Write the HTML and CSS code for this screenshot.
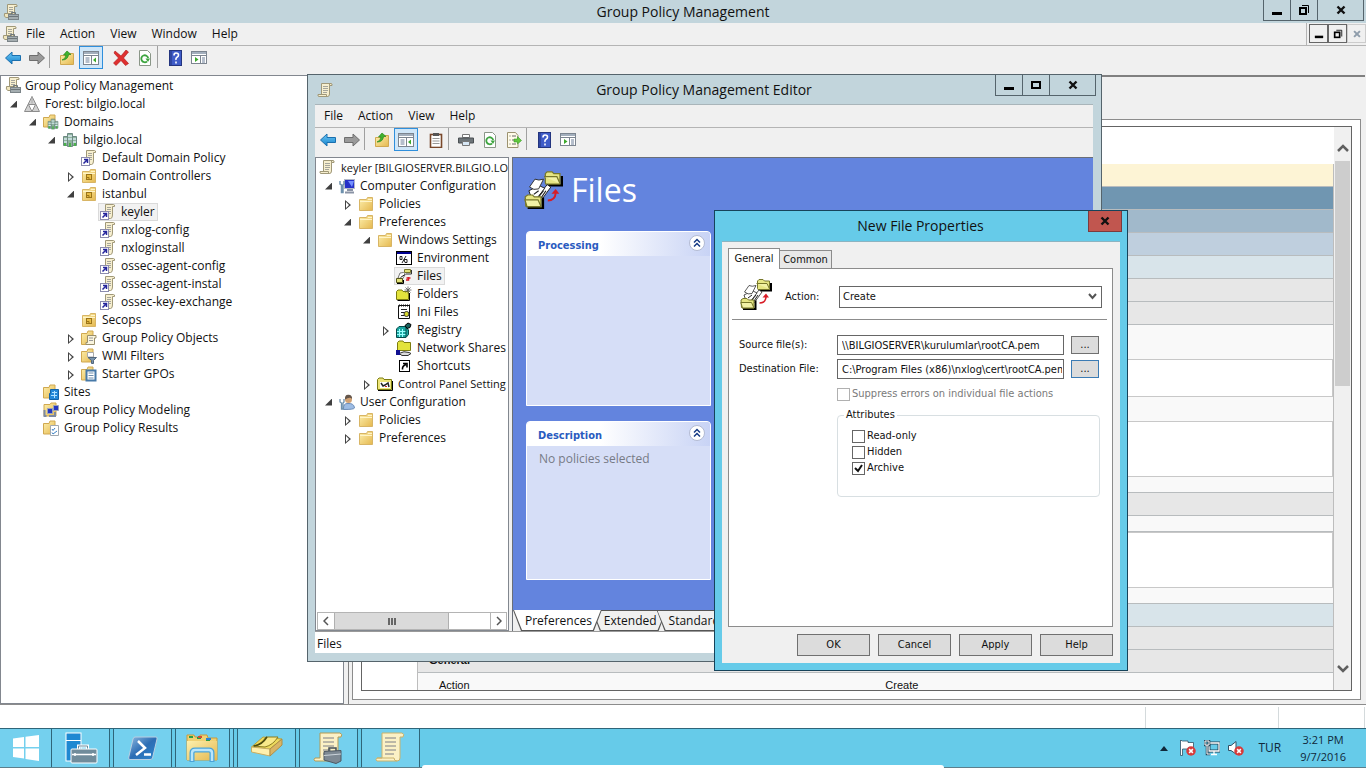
FILE: index.html
```
<!DOCTYPE html>
<html lang="en">
<head>
    <meta charset="utf-8">
    <title>Group Policy Management</title>
    <link rel="stylesheet" href="styles.css">
</head>
<body>
    <!-- icon set -->
    <svg class="defs" width="0" height="0" aria-hidden="true">
        <linearGradient id="gold" x1="0" y1="0" x2="1" y2="1"><stop offset="0" stop-color="#fdf0ae"/><stop offset="1" stop-color="#e5b84f"/></linearGradient>
        <linearGradient id="blue" x1="0" y1="0" x2="0" y2="1"><stop offset="0" stop-color="#6cc8f5"/><stop offset="1" stop-color="#1682cc"/></linearGradient>
        <linearGradient id="shell" x1="0" y1="0" x2="1" y2="1"><stop offset="0" stop-color="#8fb9e0"/><stop offset=".5" stop-color="#2c6db4"/><stop offset="1" stop-color="#2d88d0"/></linearGradient>
        <symbol id="scroll" viewBox="0 0 16 16">
            <path d="M4.500 1.500H14q1.500 0 1 2H12.500V12q0 2.500-2 2.500H2Q.5 14.500 1 12.500H4.500Z" fill="#f7efcf" stroke="#a09878"/>
            <path d="M1.500 12.500H9.500q-.5 2 1 2M12.500 3.500V2" fill="none" stroke="#a09878"/>
            <path d="M6 4.500h5M6 6.500h5M6 8.500h5M6 10.500h4" stroke="#a5a59c"/>
        </symbol>
        <symbol id="gpm" viewBox="0 0 16 16">
            <path d="M4.500.5H13q1.500 0 1 2H11.500V10.500H2.500V9.500H4.500Z" fill="#f7efcf" stroke="#a09878"/>
            <path d="M6 3.500h4M6 5.500h4M6 7.500h4" stroke="#a5a59c"/>
            <path d="M1.500 9.500H10V13.500H3Q.5 13 1.500 9.500Z" fill="#f1e6bd" stroke="#a09878"/>
            <rect x="5.500" y="10.500" width="10" height="5" fill="#a4adb0" stroke="#7b8488"/><path d="M8.500 10V8.500h4V10M6 12.500h9" fill="none" stroke="#6d767a"/>
        </symbol>
        <symbol id="link" viewBox="0 0 16 16">
            <path d="M5.500.5H13.500q1.500 0 1 2H12.500V11q0 3.500-2 3.500H4.500V10.500H5.500Z" fill="#f7efcf" stroke="#a09878"/>
            <path d="M7 3.500h4M7 5.500h4M7 7.500h4M9 9.500h2" stroke="#a5a59c"/>
            <rect x=".5" y="7.500" width="8" height="8" fill="#fff" stroke="#8c8cae"/><path d="M2.500 13.500 6 10M3 9.500H6.500V13" fill="none" stroke="#25259c" stroke-width="1.500"/>
        </symbol>
        <symbol id="folder" viewBox="0 0 16 16">
            <path d="M1.500 3.500H8.500L9.500 1.500H14.500V14.500H1.500Z" fill="url(#gold)" stroke="#d8b565"/><path d="M10 3.500h4M2 5.500h12" stroke="#fff4c8"/>
        </symbol>
        <symbol id="ou" viewBox="0 0 16 16">
            <use href="#folder"/><rect x="5.500" y="6.500" width="5" height="5" fill="#e8bd44" stroke="#9b7418"/><path d="M5 9.500h3v2" fill="none" stroke="#9b7418"/>
        </symbol>
        <symbol id="forest" viewBox="0 0 16 16">
            <path d="M8 .5 15.500 15.500H.5Z" fill="#d0d0d0" stroke="#8c8c8c"/><path d="M4.500 8.500h7L8 15.500Z" fill="#fff" stroke="#8c8c8c"/><path d="M8 .5v7" stroke="#aaa"/>
        </symbol>
        <symbol id="domain" viewBox="0 0 16 16">
            <path d="M5.500 1.500h5v13h-5ZM1.500 4.500h4v9h-4ZM10.500 4.500h4v9h-4Z" fill="#8fb39c" stroke="#6e8a84"/>
            <path d="M6 4h4M6 7h4M2 7h3M11 7h3M2 10h3M11 10h3" stroke="#d6e9ee" stroke-width="1.500"/><path d="M3 14v-3M8 15v-4M13 14v-3" stroke="#4cb04c" stroke-width="2"/>
        </symbol>
        <symbol id="domains" viewBox="0 0 16 16">
            <path d="M.5 3.500H6L7 1H12V13H.5Z" fill="url(#gold)" stroke="#d0a850"/><svg x="4" y="4" width="12" height="12"><use href="#domain"/></svg>
        </symbol>
        <symbol id="gpos" viewBox="0 0 16 16">
            <path d="M.5 3.500H6L7 1H12V14.500H.5Z" fill="url(#gold)" stroke="#d0a850"/><path d="M6.500 5.500H15V8H13.500V14.500H5V12.500H6.500Z" fill="#f9f4de" stroke="#998f6c"/><path d="M8 8h4M8 10.500h4" stroke="#999"/>
        </symbol>
        <symbol id="wmi" viewBox="0 0 16 16">
            <path d="M.5 3.500H6L7 1H12V14H.5Z" fill="url(#gold)" stroke="#d0a850"/><path d="M6.500 4.500H12.500V9H6.500Z" fill="#fff" stroke="#aaa"/><path d="M7 9.500h8.500L12.500 12.500V15.500H10.500V12.500Z" fill="#7893ad" stroke="#52677d"/>
        </symbol>
        <symbol id="starter" viewBox="0 0 16 16">
            <path d="M.5 3.500H6L7 1H12V14H.5Z" fill="url(#gold)" stroke="#d0a850"/><path d="M5.500 4.500H14.500V14.500H5.500Z" fill="#fff" stroke="#4779a8" stroke-width="2"/><path d="M7.500 7h5M7.500 9.500h5M7.500 12h5" stroke="#6f8eac"/>
        </symbol>
        <symbol id="sites" viewBox="0 0 16 16">
            <path d="M.5 3.500H6L7 1H12V14H.5Z" fill="url(#gold)" stroke="#d0a850"/><path d="M7.500 5.500H15.500V15.500H6.500V9.500H7.500Z" fill="#2488d8" stroke="#1463a8"/><path d="M9 8.500h5M8 11.500h6M11.500 7v7" stroke="#b2e2ff"/>
        </symbol>
        <symbol id="modeling" viewBox="0 0 16 16">
            <path d="M1 2.500H7L8 1H13V14H1Z" fill="url(#gold)" stroke="#d0a850"/><path d="M4.500 6.500h5v5h-5ZM10.500 3.500h5v5h-5Z" fill="#2536c0" stroke="#9aa3b8"/><path d="M1.500 8v6h2M12 10v4H6" fill="none" stroke="#7d8aa2" stroke-width="2"/>
        </symbol>
        <symbol id="results" viewBox="0 0 16 16">
            <path d="M.5 3.500H6L7 1H12V14H.5Z" fill="url(#gold)" stroke="#d0a850"/><path d="M7.500 5.500h8v10h-8Z" fill="#fff" stroke="#a0a8b0"/><path d="M9 9l1 1.500L12 8M9 12.500l1 1.500L14 11" fill="none" stroke="#3a80c4"/>
        </symbol>
        <symbol id="computer" viewBox="0 0 16 16">
            <rect x="5.500" y="1.500" width="10" height="9" fill="#2430c8" stroke="#b3b9ca"/><path d="M9 3h6L13 9Z" fill="#7490ff"/><path d="M8 12h6M6 14.500h9" stroke="#8a93a5" stroke-width="2"/><path d="M1 3v3l1.500 1V14.500H4V7L5 6V3" fill="none" stroke="#6d90ad" stroke-width="1.500"/>
        </symbol>
        <symbol id="user" viewBox="0 0 16 16">
            <path d="M4.500 15.500Q4 9 9 9.500q6-.5 6.500 4.500Q15 15.500 4.500 15.500Z" fill="#9dbce4" stroke="#6d8db8"/><circle cx="9.500" cy="5.500" r="3.500" fill="#d2a274"/><path d="M6 5.500Q5.500.5 9.500.8 13.500 1 13 5 11 2.500 6 5.500Z" fill="#65564b"/><path d="M1 5v3l1.500 1V15H4V9L5 8V5" fill="none" stroke="#6d90ad" stroke-width="1.300"/>
        </symbol>
        <symbol id="env" viewBox="0 0 16 16">
            <rect x=".5" y="1.500" width="15" height="13" fill="#fff" stroke="#000"/><path d="M1 3h14" stroke="#000090" stroke-width="2"/><path d="M10 6 6 13M4 6.500h2v3H4ZM8 9.500h3v3H9Z" fill="none" stroke="#222"/>
        </symbol>
        <symbol id="files" viewBox="0 0 32 32">
            <path d="M31 5V12.500H20" fill="none" stroke="#000" stroke-width="2"/>
            <path d="M17.500 10.500V3L19 1.500h4L24.500 3H29.500V11.500H18Z" fill="#e6e684" stroke="#77772a"/><path d="M16.500 5.500H27L29.500 11" fill="#f2f2a6" stroke="#77772a"/>
            <path d="M8 22 13 16 15 17 19 12 22 14 14 25Z" fill="#fff" stroke="#222" stroke-width=".8"/>
            <path d="M5 20 4 17 10 14 13 13 17 15 10 24Z" fill="#fff" stroke="#222" stroke-width=".8"/>
            <path d="M4.500 14 9 7.500Q12 9 16 7.500L12 15.500Q8 17 4.500 14Z" fill="#fff" stroke="#333" stroke-width=".8"/>
            <path d="M8 20l4-3M12 22l4-5M14 23l4-6" stroke="#222"/>
            <path d="M15.500 22.500V31H3" fill="none" stroke="#000" stroke-width="2"/>
            <path d="M1.500 29.500 1 22 3 20.500h4L8.500 22H14V30H2Z" fill="#e6e684" stroke="#77772a"/><path d="M.8 24.500H11.500L14 30H2.500Z" fill="#f2f2a6" stroke="#77772a"/>
            <path d="M19.500 25q6 0 6.500-6" fill="none" stroke="#d81c26" stroke-width="1.600"/><path d="M22.500 19.500 26 15.500 29 19.500Z" fill="#d81c26"/>
        </symbol>
        <symbol id="files-small" viewBox="0 0 16 16">
            <path d="M8.500 4.500V1.500H14.500V4.500Z" fill="#e3e37a" stroke="#77772a"/><path d="M15.500 2v4H10" fill="none" stroke="#333"/>
            <path d="M2 10 4 5 7.500 4.500 9.500 6 6.500 11Z" fill="#fff" stroke="#555" stroke-width=".8"/><path d="M4.500 9.500 9 6.500" stroke="#222"/>
            <path d="M.5 14.500V10.500H6.500V14.500Z" fill="#e3e37a" stroke="#55551a"/><path d="M1 15.500H7.500V12" fill="none" stroke="#000"/>
            <path d="M10 12h2.500V9M10.500 10h4" fill="none" stroke="#d81c26" stroke-width="1.500"/>
        </symbol>
        <symbol id="folders" viewBox="0 0 16 16">
            <path d="M.5 13.500V5.500L2 4H6l1 1.500h5.500v8Z" fill="#e3e33c" stroke="#7c7c10"/><path d="M1.500 14.500h12V7" fill="none" stroke="#000"/><path d="M12 .5v7M8.500 4h7M9.500 1.500l5 5M14.500 1.500l-5 5" stroke="#555" stroke-width=".8"/>
        </symbol>
        <symbol id="ini" viewBox="0 0 16 16">
            <path d="M2.500 1.500h11v13h-11Z" fill="#fff" stroke="#111"/><path d="M3 1.500h11" stroke="#111" stroke-width="2" stroke-dasharray="1 1"/><path d="M5 5.500h6M5 8.500h4M5 11.500h3" stroke="#222"/><circle cx="10.500" cy="10" r="2.500" fill="#d8d830" stroke="#333"/>
        </symbol>
        <symbol id="registry" viewBox="0 0 16 16">
            <path d="M.5 7 3 4.500H9.500L12.500 8V12.500L10 15.500H.5Z" fill="#1ba7a2" stroke="#064a4a"/><path d="M3.500 7v8M6.500 7v8M1 9.500h9M1 12.500h9" stroke="#9ff"/><path d="M10 5v10" stroke="#064a4a"/><path d="M9 3.500 12 1l3 1.500-1 3-3 1Z" fill="#18615e" stroke="#000"/>
        </symbol>
        <symbol id="shares" viewBox="0 0 16 16">
            <path d="M1.500 10.500V2.500L3 1H7L8 2.500h6.500v8Z" fill="#e3e33c" stroke="#7c7c10"/><path d="M3 13.500q5-3 10-1l2 1-3 2H6Z" fill="#ddd" stroke="#333"/><rect x="0" y="10" width="4" height="5" fill="#101090"/>
        </symbol>
        <symbol id="shortcut" viewBox="0 0 16 16">
            <rect x="3.500" y="2.500" width="10" height="11" fill="#fff" stroke="#000"/><path d="M6.500 11.500Q6 8 10 6.500M7 5.500h4v4" fill="none" stroke="#000" stroke-width="1.600"/>
        </symbol>
        <symbol id="control" viewBox="0 0 16 16">
            <path d="M.5 13.500V3.500L2 2H6l1 1.500h7.500v10Z" fill="#efe67a" stroke="#7c7c10"/><path d="M1 14.500h14.500V5" fill="none" stroke="#000"/><rect x="3" y="6" width="10" height="6" fill="#fff"/><path d="M4 7l2 3 2-1 3-2 1 4" fill="none" stroke="#222" stroke-width="1.500"/><path d="M8 10.500h2" stroke="#c22"/>
        </symbol>
        <symbol id="back" viewBox="0 0 16 16"><path d="M.5 8 7 2V5.500h8.500v5H7V14Z" fill="url(#blue)" stroke="#1a6fae"/></symbol>
        <symbol id="forward" viewBox="0 0 16 16"><path d="M15.500 8 9 2V5.500H.5v5H9V14Z" fill="#9a9a9a" stroke="#6e6e6e"/></symbol>
        <symbol id="up" viewBox="0 0 16 16"><path d="M1.500 5.500H9.500L10.500 3.500H14.500V14.500H1.500Z" fill="url(#gold)" stroke="#d0a850"/><path d="M3 10Q6.500 9 7 5H4.500L8 1 12 4.500H9.500Q9 10 3 10Z" fill="#3fb22e" stroke="#288a1c" stroke-width=".7"/></symbol>
        <symbol id="pane" viewBox="0 0 16 16">
            <rect x=".5" y="1.500" width="15" height="13" fill="#fff" stroke="#7c8590"/><path d="M1 3h14" stroke="#a3afbd" stroke-width="2"/><path d="M1 5.500h14M8.500 6v9" stroke="#7c8590"/><path d="M2.500 8h4M2.500 10h4M2.500 12h4" stroke="#6c7f99"/><path d="M13 7.500v5L10 10Z" fill="#3aa82a"/>
        </symbol>
        <symbol id="paneright" viewBox="0 0 16 16">
            <rect x=".5" y="1.500" width="15" height="12" fill="#fff" stroke="#7c8590"/><path d="M1 3h14" stroke="#a3afbd" stroke-width="2"/><path d="M1 5.500h14M9.500 6v8" stroke="#7c8590"/><path d="M11 8h3M11 10h3M11 12h3" stroke="#6c7f99"/><path d="M4 7v5L7.500 9.500Z" fill="#3aa82a"/>
        </symbol>
        <symbol id="delete" viewBox="0 0 16 16"><path d="M2 1 8 6 13 0l2.500 2L10.500 8l5 5.500L12.500 15.500 8 10.500 3 15.500.5 13 5.500 8 1 3Z" fill="#df3030" stroke="#ad1414" stroke-width=".6"/></symbol>
        <symbol id="refresh" viewBox="0 0 16 16"><path d="M2.500.5h8L13.500 3.500V15.500H2.500Z" fill="#fff" stroke="#8a9688"/><path d="M10 11.500A3.500 3.500 0 1 1 11.200 8" fill="none" stroke="#3da53f" stroke-width="1.800"/><path d="M8.500 8.500H13L11 12Z" fill="#3da53f"/></symbol>
        <symbol id="help" viewBox="0 0 16 16"><rect x="2.500" y=".5" width="12" height="15" fill="#3f5cc8" stroke="#24357f"/><path d="M4 1v14" stroke="#23337c"/><path d="M7 5.500Q7 3 9 3q2.500 0 2.500 2 0 1.500-1.500 2.300T9 10M9 11.500v2" fill="none" stroke="#fff" stroke-width="1.600"/></symbol>
        <symbol id="clip" viewBox="0 0 16 16"><rect x="2.500" y="2.500" width="11" height="13" fill="#fff" stroke="#79482b" stroke-width="1.600"/><path d="M5 2.500h6" stroke="#555" stroke-width="3"/><path d="M4.500 6.500h7M4.500 9h7M4.500 11.500h7" stroke="#999"/></symbol>
        <symbol id="print" viewBox="0 0 16 16"><path d="M4.500 2.500h7v3h-7Z" fill="#fff" stroke="#777"/><path d="M.5 6h15v5H.5Z" fill="#6d7478" stroke="#4c5154"/><path d="M4.500 9.500h7v4h-7Z" fill="#d7e7f5" stroke="#777"/></symbol>
        <symbol id="export" viewBox="0 0 16 16"><path d="M1.500.5h8L12 3.500V15.500H1.500Z" fill="#fffbe9" stroke="#9c9270"/><path d="M3.500 4h1M6 4h4M3.500 8h1M6 8h3M3.500 12h1M6 12h4" stroke="#666"/><path d="M8 7h3.500V4.500L15.500 8.500 11.500 12V10H8Z" fill="#63c83f" stroke="#379a25" stroke-width=".6"/></symbol>
        <symbol id="chevrons" viewBox="0 0 16 16"><circle cx="8" cy="8" r="7.500" fill="#fff" stroke="#b2bad2"/><path d="M5 7.500l3-3 3 3M5 11.500l3-3 3 3" fill="none" stroke="#173b86" stroke-width="1.500"/></symbol>
        <symbol id="error" viewBox="0 0 8 8"><circle cx="4" cy="4" r="3.800" fill="#d63b3b"/><path d="M2.500 2.500l3 3M5.500 2.500l-3 3" stroke="#fff" stroke-width="1.200"/></symbol>
        <symbol id="min" viewBox="0 0 12 12"><path d="M1 9.500h10" stroke="#000" stroke-width="3"/></symbol>
        <symbol id="max" viewBox="0 0 12 12"><rect x="2" y="3" width="8" height="6" fill="none" stroke="#000" stroke-width="2"/></symbol>
        <symbol id="restore" viewBox="0 0 12 12"><rect x="2" y="4" width="6" height="6" fill="none" stroke="#000" stroke-width="2"/><path d="M4 1.500h6.500V9" fill="none" stroke="#000"/></symbol>
        <symbol id="close" viewBox="0 0 12 12"><path d="M2.500 2.500l7 7M9.500 2.500l-7 7" stroke="currentColor" stroke-width="2.400"/></symbol>
    </svg>

    <header class="titlebar">
        <svg class="icon"><use href="#gpm"/></svg>
        <h1>Group Policy Management</h1>
        <div class="caption">
            <button aria-label="Minimize"><svg><use href="#min"/></svg></button><button aria-label="Restore"><svg><use href="#restore"/></svg></button><button class="wide" aria-label="Close"><svg><use href="#close"/></svg></button>
        </div>
    </header>

    <nav class="menubar main-menu">
        <svg class="icon"><use href="#gpm"/></svg>
        <button>File</button><button>Action</button><button>View</button><button>Window</button><button>Help</button>
        <div class="mdi">
            <button aria-label="Minimize child"><svg><use href="#min"/></svg></button><button aria-label="Restore child"><svg><use href="#restore"/></svg></button><button class="off" aria-label="Close child" disabled><svg><use href="#close"/></svg></button>
        </div>
    </nav>

    <div class="toolbar">
        <button aria-label="Back"><svg class="icon"><use href="#back"/></svg></button>
        <button aria-label="Forward"><svg class="icon"><use href="#forward"/></svg></button>
        <span class="sep"></span>
        <button aria-label="Up"><svg class="icon"><use href="#up"/></svg></button>
        <button class="on" aria-label="Show tree"><svg class="icon"><use href="#pane"/></svg></button>
        <span class="space"></span>
        <button aria-label="Delete"><svg class="icon"><use href="#delete"/></svg></button>
        <button aria-label="Refresh"><svg class="icon"><use href="#refresh"/></svg></button>
        <span class="sep"></span>
        <button aria-label="Help topics"><svg class="icon"><use href="#help"/></svg></button>
        <button aria-label="Show actions"><svg class="icon"><use href="#paneright"/></svg></button>
    </div>

    <main class="workspace">
        <div class="tree console-tree">
            <div class="root"><svg class="icon"><use href="#gpm"/></svg>Group Policy Management</div>
            <ul>
                <li><div class="row open"><span class="item"><svg class="icon"><use href="#forest"/></svg>Forest: bilgio.local</span></div>
                    <ul>
                        <li><div class="row open"><span class="item"><svg class="icon"><use href="#domains"/></svg>Domains</span></div>
                            <ul>
                                <li><div class="row open"><span class="item"><svg class="icon"><use href="#domain"/></svg>bilgio.local</span></div>
                                    <ul>
                                        <li><div class="row"><span class="item"><svg class="icon"><use href="#link"/></svg>Default Domain Policy</span></div></li>
                                        <li><div class="row shut"><span class="item"><svg class="icon"><use href="#ou"/></svg>Domain Controllers</span></div></li>
                                        <li><div class="row open"><span class="item"><svg class="icon"><use href="#ou"/></svg>istanbul</span></div>
                                            <ul>
                                                <li><div class="row"><span class="item selected"><svg class="icon"><use href="#link"/></svg>keyler</span></div></li>
                                                <li><div class="row"><span class="item"><svg class="icon"><use href="#link"/></svg>nxlog-config</span></div></li>
                                                <li><div class="row"><span class="item"><svg class="icon"><use href="#link"/></svg>nxloginstall</span></div></li>
                                                <li><div class="row"><span class="item"><svg class="icon"><use href="#link"/></svg>ossec-agent-config</span></div></li>
                                                <li><div class="row"><span class="item"><svg class="icon"><use href="#link"/></svg>ossec-agent-instal</span></div></li>
                                                <li><div class="row"><span class="item"><svg class="icon"><use href="#link"/></svg>ossec-key-exchange</span></div></li>
                                            </ul>
                                        </li>
                                        <li><div class="row"><span class="item"><svg class="icon"><use href="#ou"/></svg>Secops</span></div></li>
                                        <li><div class="row shut"><span class="item"><svg class="icon"><use href="#gpos"/></svg>Group Policy Objects</span></div></li>
                                        <li><div class="row shut"><span class="item"><svg class="icon"><use href="#wmi"/></svg>WMI Filters</span></div></li>
                                        <li><div class="row shut"><span class="item"><svg class="icon"><use href="#starter"/></svg>Starter GPOs</span></div></li>
                                    </ul>
                                </li>
                            </ul>
                        </li>
                        <li><div class="row"><span class="item"><svg class="icon"><use href="#sites"/></svg>Sites</span></div></li>
                        <li><div class="row"><span class="item"><svg class="icon"><use href="#modeling"/></svg>Group Policy Modeling</span></div></li>
                        <li><div class="row"><span class="item"><svg class="icon"><use href="#results"/></svg>Group Policy Results</span></div></li>
                    </ul>
                </li>
            </ul>
        </div>

        <section class="details">
            <div class="tabpage">
                <div class="report">
                    <div class="report-body">
                        <div class="band note"></div>
                        <div class="band level0"></div>
                        <div class="band level1"></div>
                        <div class="band level2"></div>
                        <div class="band level3"></div>
                        <div class="band level4"></div>
                        <div class="band level4"></div>
                        <div class="box first"></div>
                        <div class="gap"></div>
                        <div class="box"></div>
                        <div class="gap short"></div>
                        <div class="band level4"></div>
                        <div class="gap short"></div>
                        <div class="box"></div>
                        <div class="gap short"></div>
                        <div class="band level3"></div>
                        <div class="band level4"></div>
                        <div class="band level4">General</div>
                        <table class="values">
                            <tr><td>Action</td><td>Create</td></tr>
                        </table>
                    </div>
                    <div class="vscroll">
                        <svg viewBox="0 0 12 8"><path d="M1 7 6 2l5 5" fill="none" stroke="#5f5f5f" stroke-width="2.500"/></svg>
                        <div class="thumb"></div>
                        <svg class="down" viewBox="0 0 12 8"><path d="M1 1l5 5 5-5" fill="none" stroke="#5f5f5f" stroke-width="2.500"/></svg>
                    </div>
                </div>
            </div>
        </section>
    </main>

    <footer class="statusbar"><span></span><span></span></footer>

    <nav class="taskbar">
        <button class="start" aria-label="Start"><svg width="28" height="28" viewBox="0 0 28 28"><path d="M1 4.500 12 3V13H1ZM13.500 2.800 27 1V13H13.500ZM1 14.500H12V24.500L1 23ZM13.500 14.500H27V27L13.500 25Z" fill="#fff"/></svg></button>
        <button class="task" aria-label="Server Manager"><svg width="34" height="34" viewBox="0 0 34 34"><rect x="2" y="2" width="15" height="28" fill="#1e88d2" stroke="#fff"/><path d="M2 9.500h15" stroke="#fff"/><path d="M14.500 18v-3h9v3" fill="none" stroke="#fff" stroke-width="3"/><path d="M14.500 18v-3h9v3" fill="none" stroke="#6d8b9c"/><rect x="7" y="18" width="26" height="14" rx="1" fill="#708c9b" stroke="#fff"/><path d="M8 23.500H32M11 22v3M29 22v3" stroke="#fff" stroke-width="1.500"/></svg></button>
        <button class="task" aria-label="PowerShell"><svg width="30" height="26" viewBox="0 0 30 26"><path d="M7 2H28Q29.500 2 29 4L24.500 23Q24 24.500 22 24.500H2Q0 24.500.8 22L5 4Q5.500 2 7 2Z" fill="url(#shell)" stroke="#b9cfe2"/><path d="M10 6l7 7-9 7M16 19.500h7" fill="none" stroke="#fff" stroke-width="2.500"/></svg></button>
        <button class="task stack" aria-label="File Explorer"><svg width="34" height="32" viewBox="0 0 34 32"><path d="M2 6V3h7l1 2h5V3h7l1 3h9V28H2Z" fill="#f0d173" stroke="#c79b3d"/><path d="M4 5h4M12 6h4M21 8h4" stroke="#2a9d48" stroke-width="2"/><path d="M13 5h4" stroke="#d34a36" stroke-width="2"/><path d="M21 7h5" stroke="#2a82d4" stroke-width="2"/><path d="M2 9H32V28H2Z" fill="url(#gold)"/><path d="M7 30V21q0-3 3-3H24q3 0 3 3v9" fill="none" stroke="#4aa3da" stroke-width="5"/><path d="M7 29V21q0-3 3-3H24q3 0 3 3v8" fill="none" stroke="#b9e6fb" stroke-width="2.500"/></svg></button>
        <button class="task high" aria-label="Active Directory"><svg width="32" height="22" viewBox="0 0 32 22"><path d="M.5 12 12 2 31 4 19 14Z" fill="#ecd95d" stroke="#b5a241"/><path d="M2 11Q10 10 15 2L27 2Q22 10 14 12Z" fill="#f8e98a" stroke="#8b7c1c"/><path d="M3 11Q11 10 16 2" fill="none" stroke="#4a4a10" stroke-width="1.500"/><path d="M.5 12 19 14v7L.5 17Z" fill="#fff0ad" stroke="#c9ae62"/><path d="M19 14 31 4v6L19 21Z" fill="#d9b565" stroke="#b08e45"/></svg></button>
        <button class="task" aria-label="Group Policy Management"><svg width="32" height="32" viewBox="0 0 32 32"><path d="M7 1H27q3 1 1 4H25V26q0 3-3 3H2q-2-1 0-3H7Z" fill="#fbf1c6" stroke="#b59b53"/><path d="M10 6h11M10 10h11M10 14h11M10 18h8M10 22h4" stroke="#7d7f87"/><path d="M16 19v-3h7v3" fill="none" stroke="#434d57" stroke-width="1.500"/><path d="M11 19.500 28 18.500V29L23 31.500 11 28Z" fill="#7d8993" stroke="#4c5864"/><path d="M11 23.500 28 22" stroke="#cbd4db"/></svg></button>
        <button class="task" aria-label="Group Policy Editor"><svg width="32" height="32" viewBox="0 0 32 32"><path d="M7 1H27q3 1 1 4H25V26q0 3-3 3H2q-2-1 0-3H7Z" fill="#fbf1c6" stroke="#c9b26c"/><path d="M2 26H19q0 3 3 3" fill="none" stroke="#c9b26c"/><path d="M10 6h11M10 10h11M10 14h11M10 18h11M10 22h9" stroke="#7d7f87"/></svg></button>
        <div class="tray">
            <svg class="more" width="8" height="5" viewBox="0 0 8 5"><path d="M0 5 4 0l4 5Z" fill="#10283a"/></svg>
            <svg class="icon" viewBox="0 0 16 16"><path d="M.5 0v15.500h2V9h6V7.500h5V2.500H8V1H2.500Z" fill="#fff" stroke="#315064" stroke-width=".8"/><svg x="6" y="6" width="10" height="10"><use href="#error"/></svg></svg>
            <svg class="icon" viewBox="0 0 16 16"><rect x="5" y="3" width="10" height="8" fill="#66cbe9" stroke="#264558" stroke-width="3"/><path d="M5 3h10v8H5ZM7 14.500h6M10 11v3" fill="none" stroke="#fff" stroke-width="1.300"/><path d="M1 1h4v4H1ZM3 5v9h3" fill="none" stroke="#264558" stroke-width="2.500"/><path d="M1 1h4v4H1ZM3 5v9h3" fill="none" stroke="#fff"/></svg>
            <svg class="icon" viewBox="0 0 16 16"><path d="M.5 5.500H3L8 1.500V14L3 10.500H.5Z" fill="#fff" stroke="#315064"/><svg x="6" y="6" width="10" height="10"><use href="#error"/></svg></svg>
            <span class="lang">TUR</span>
            <time>3:21 PM<br>9/7/2016</time>
        </div>
        <span class="peek"></span>
    </nav>

    <!-- policy editor -->
    <section class="window editor">
        <header class="window-title">
            <svg class="icon"><use href="#scroll"/></svg>
            <h2>Group Policy Management Editor</h2>
            <div class="caption">
                <button aria-label="Minimize editor"><svg><use href="#min"/></svg></button><button aria-label="Maximize editor"><svg><use href="#max"/></svg></button><button class="wide" aria-label="Close editor"><svg><use href="#close"/></svg></button>
            </div>
        </header>
        <div class="window-body">
            <nav class="menubar"><button>File</button><button>Action</button><button>View</button><button>Help</button></nav>
            <div class="toolbar">
                <button aria-label="Back"><svg class="icon"><use href="#back"/></svg></button>
                <button aria-label="Forward"><svg class="icon"><use href="#forward"/></svg></button>
                <span class="sep"></span>
                <button aria-label="Up"><svg class="icon"><use href="#up"/></svg></button>
                <button class="on" aria-label="Show tree"><svg class="icon"><use href="#pane"/></svg></button>
                <span class="space"></span>
                <button aria-label="Paste"><svg class="icon"><use href="#clip"/></svg></button>
                <span class="sep"></span>
                <button aria-label="Print"><svg class="icon"><use href="#print"/></svg></button>
                <button aria-label="Refresh"><svg class="icon"><use href="#refresh"/></svg></button>
                <button aria-label="Export list"><svg class="icon"><use href="#export"/></svg></button>
                <span class="sep"></span>
                <button aria-label="Help topics"><svg class="icon"><use href="#help"/></svg></button>
                <button aria-label="Show actions"><svg class="icon"><use href="#paneright"/></svg></button>
            </div>
            <div class="panes">
                <div class="tree policy-tree">
                    <div class="root long"><svg class="icon"><use href="#scroll"/></svg>keyler [BILGIOSERVER.BILGIO.LO</div>
                    <ul>
                        <li><div class="row open"><span class="item"><svg class="icon"><use href="#computer"/></svg>Computer Configuration</span></div>
                            <ul>
                                <li><div class="row shut"><span class="item"><svg class="icon"><use href="#folder"/></svg>Policies</span></div></li>
                                <li><div class="row open"><span class="item"><svg class="icon"><use href="#folder"/></svg>Preferences</span></div>
                                    <ul>
                                        <li><div class="row open"><span class="item"><svg class="icon"><use href="#folder"/></svg>Windows Settings</span></div>
                                            <ul>
                                                <li><div class="row"><span class="item"><svg class="icon"><use href="#env"/></svg>Environment</span></div></li>
                                                <li><div class="row"><span class="item selected"><svg class="icon"><use href="#files-small"/></svg>Files</span></div></li>
                                                <li><div class="row"><span class="item"><svg class="icon"><use href="#folders"/></svg>Folders</span></div></li>
                                                <li><div class="row"><span class="item"><svg class="icon"><use href="#ini"/></svg>Ini Files</span></div></li>
                                                <li><div class="row shut"><span class="item"><svg class="icon"><use href="#registry"/></svg>Registry</span></div></li>
                                                <li><div class="row"><span class="item"><svg class="icon"><use href="#shares"/></svg>Network Shares</span></div></li>
                                                <li><div class="row"><span class="item"><svg class="icon"><use href="#shortcut"/></svg>Shortcuts</span></div></li>
                                            </ul>
                                        </li>
                                        <li><div class="row shut long"><span class="item"><svg class="icon"><use href="#control"/></svg>Control Panel Setting</span></div></li>
                                    </ul>
                                </li>
                            </ul>
                        </li>
                        <li><div class="row open"><span class="item"><svg class="icon"><use href="#user"/></svg>User Configuration</span></div>
                            <ul>
                                <li><div class="row shut"><span class="item"><svg class="icon"><use href="#folder"/></svg>Policies</span></div></li>
                                <li><div class="row shut"><span class="item"><svg class="icon"><use href="#folder"/></svg>Preferences</span></div></li>
                            </ul>
                        </li>
                    </ul>
                    <div class="hscroll">
                        <button aria-label="Scroll left"><svg width="6" height="10" viewBox="0 0 6 10"><path d="M5 1 1 5l4 4" fill="none" stroke="#555" stroke-width="1.500"/></svg></button>
                        <div class="thumb"><i></i><i></i><i></i></div>
                        <button aria-label="Scroll right"><svg width="6" height="10" viewBox="0 0 6 10"><path d="M1 1l4 4-4 4" fill="none" stroke="#555" stroke-width="1.500"/></svg></button>
                    </div>
                </div>
                <div class="extension">
                    <div class="canvas">
                        <div class="heading"><svg><use href="#files"/></svg><span>Files</span></div>
                        <div class="card processing">
                            <header><h3>Processing</h3><button aria-label="Collapse processing"><svg class="icon"><use href="#chevrons"/></svg></button></header>
                        </div>
                        <div class="card description">
                            <header><h3>Description</h3><button aria-label="Collapse description"><svg class="icon"><use href="#chevrons"/></svg></button></header>
                            <p>No policies selected</p>
                        </div>
                    </div>
                    <div class="sheet-tabs"><button class="current">Preferences</button><button>Extended</button><button>Standard</button></div>
                </div>
            </div>
            <div class="editor-status">Files</div>
        </div>
    </section>

    <!-- file properties dialog -->
    <form class="window dialog">
        <header class="window-title">
            <h2>New File Properties</h2>
            <button type="button" class="dialog-close" aria-label="Close dialog"><svg><use href="#close"/></svg></button>
        </header>
        <div class="window-body">
            <div class="tabs"><button type="button" class="current">General</button><button type="button">Common</button></div>
            <div class="page">
                <div class="action-row">
                    <svg><use href="#files"/></svg>
                    <label for="action">Action:</label>
                    <select id="action"><option>Create</option></select>
                </div>
                <hr>
                <div class="field">
                    <label for="source">Source file(s):</label>
                    <input type="text" id="source" value="\\BILGIOSERVER\kurulumlar\rootCA.pem">
                    <button type="button">...</button>
                </div>
                <div class="field">
                    <label for="dest">Destination File:</label>
                    <input type="text" id="dest" value="C:\Program Files (x86)\nxlog\cert\rootCA.pem">
                    <button type="button" class="default">...</button>
                </div>
                <div class="options">
                    <label class="check off"><input type="checkbox" disabled>Suppress errors on individual file actions</label>
                    <fieldset>
                        <legend>Attributes</legend>
                        <label class="check"><input type="checkbox">Read-only</label>
                        <label class="check"><input type="checkbox">Hidden</label>
                        <label class="check"><input type="checkbox" checked>Archive</label>
                    </fieldset>
                </div>
            </div>
            <div class="actions">
                <button type="button">OK</button><button type="button">Cancel</button><button type="button">Apply</button><button type="button">Help</button>
            </div>
        </div>
    </form>
</body>
</html>
```
FILE: styles.css
```
* {
    box-sizing: border-box;
}
body {
    margin: 0;
    height: 100vh;
    display: flex;
    flex-direction: column;
    overflow: hidden;
    background: #f0f0f0;
    color: #111;
    font-family: "Open Sans", "Noto Sans", sans-serif;
    font-size: 12px;
    line-height: 18px;
}
button, input, select {
    font: inherit;
    color: inherit;
    margin: 0;
    padding: 0;
    border: 0;
    border-radius: 0;
    background: none;
}
h1, h2, h3, p, ul {
    margin: 0;
    padding: 0;
    font-weight: normal;
}
ul {
    list-style: none;
}
svg {
    display: block;
    flex: none;
}
.defs {
    position: absolute;
}
.icon {
    width: 16px;
    height: 16px;
}

/* title bars */
.titlebar {
    display: flex;
    align-items: flex-start;
    height: 23px;
    flex: none;
    background: #c2d5dc;
}
.titlebar .icon {
    margin: 4px 0 0 3px;
}
.titlebar h1, .window-title h2 {
    flex: 1;
    text-align: center;
    font-size: 14px;
    line-height: 23px;
}
.titlebar h1 {
    padding-left: 84px;
}
.caption {
    display: flex;
    margin-right: 2px;
    border: 1px solid #55646c;
    border-top: 0;
}
.caption button {
    width: 27px;
    height: 20px;
    display: flex;
    align-items: center;
    justify-content: center;
    border-right: 1px solid #55646c;
}
.caption .wide {
    width: 45px;
    border-right: 0;
}
.caption svg, .dialog-close svg {
    width: 12px;
    height: 12px;
}

/* menus and toolbars */
.menubar {
    display: flex;
    align-items: center;
    height: 23px;
    flex: none;
    padding-left: 1px;
    border-bottom: 1px solid #b4b4b4;
}
.menubar button {
    padding: 0 7px 0 8px;
}
.main-menu {
    padding-left: 2px;
}
.menubar .mdi {
    display: flex;
    align-self: stretch;
    margin-left: auto;
    padding: 1px 0 2px 2px;
    border-left: 1px solid #b4b4b4;
}
.mdi button {
    width: 19px;
    padding: 0;
    display: flex;
    align-items: center;
    justify-content: center;
    border: 1px solid #666;
}
.mdi svg {
    width: 10px;
    height: 10px;
}
.mdi .off {
    border-color: #ccc;
    color: #8f9dab;
}
.toolbar {
    display: flex;
    height: 29px;
    flex: none;
    padding-left: 1px;
}
.toolbar button {
    width: 24px;
    height: 23px;
    display: flex;
    align-items: center;
    justify-content: center;
}
.toolbar .on {
    border: 1px solid #2f8fdc;
    background: #cfe6f8;
}
.sep {
    width: 1px;
    height: 22px;
    margin-right: 5px;
    background: #a0a0a0;
}
.space {
    width: 6px;
}

/* trees */
.tree {
    overflow: hidden;
    white-space: nowrap;
    background: #fff;
    border: 1px solid #82878f;
}
.root {
    display: flex;
    gap: 4px;
    height: 18px;
}
.tree > ul {
    padding-left: 9px;
}
.tree ul ul {
    padding-left: 19px;
}
.row {
    display: flex;
    align-items: center;
    height: 18px;
    padding-left: 12px;
}
.row.open, .row.shut {
    padding-left: 0;
}
.row.open::before {
    content: "";
    flex: none;
    width: 7px;
    height: 7px;
    margin-right: 5px;
    background: #404040;
    clip-path: polygon(100% 0, 100% 100%, 0 100%);
}
.row.shut::before {
    content: "";
    flex: none;
    width: 6px;
    height: 10px;
    margin: 2px 5px 0 1px;
    background: #444;
    clip-path: polygon(0 0, 6px 5px, 0 10px, 0 0, 1px 2px, 1px 8px, 4px 5px, 1px 2px);
}
.long {
    font-size: 11px;
}
.item {
    display: flex;
    align-items: center;
    height: 18px;
    line-height: 16px;
    gap: 5px;
    padding: 0 2px 0 1px;
    border: 1px solid transparent;
}
.selected {
    background: #f2f2f2;
    border-color: #dadada;
}

/* main workspace */
.workspace {
    flex: 1;
    min-height: 0;
    display: flex;
    gap: 4px;
}
.console-tree {
    width: 344px;
    padding-top: 1px;
}
.console-tree .root {
    padding-left: 4px;
}
.details {
    flex: 1;
    display: flex;
    margin-right: 1px;
    padding: 42px 4px 4px 3px;
    border: 1px solid #808080;
    border-width: 2px 0 0 1px;
}
.tabpage {
    flex: 1;
    display: flex;
    padding: 6px 8px 8px;
    background: #fff;
    border: 1px solid #8c8c8c;
}
.report {
    flex: 1;
    display: flex;
    min-width: 0;
    overflow: hidden;
    border: 1px solid #646464;
}
.report-body {
    flex: 1;
    margin: 37px 0 0 55px;
    overflow: hidden;
    background: #f9f9f9;
    border: 1px solid #bdbdbd;
    border-width: 0 1px;
}
.band {
    height: 23px;
    padding-left: 11px;
    border-bottom: 1px solid #b8bcbe;
    font: bold 11px/21px "Liberation Sans", Arial, sans-serif;
}
.note { background: #fdf4d5; }
.level0 { background: #7096b1; }
.level1 { background: #a1b9cb; }
.level2 { background: #bfcfde; }
.level3 { background: #d8e4ea; }
.level4 { background: #e7e7e7; }
.gap {
    height: 24px;
}
.box {
    height: 56px;
    background: #fff;
    border: 1px solid #c8c8c8;
    border-left: 0;
}
.box.first {
    height: 38px;
    margin-top: 34px;
}
.gap.short {
    height: 16px;
    border-bottom: 1px solid #b8bcbe;
}
.values {
    width: 100%;
    border-spacing: 0;
    font: 11px/12px "Liberation Sans", Arial, sans-serif;
}
.values td {
    width: 51%;
    padding: 6px 0 0 19px;
}
.values td:first-child {
    width: 49%;
    padding-left: 21px;
}
.vscroll {
    width: 17px;
    display: flex;
    flex-direction: column;
    align-items: center;
    padding: 17px 0;
    background: #f0f0f0;
}
.vscroll svg {
    width: 12px;
    height: 8px;
}
.vscroll .thumb {
    width: 15px;
    height: 225px;
    margin-top: 9px;
    background: #cdcdcd;
}
.vscroll .down {
    margin-top: auto;
}
.statusbar {
    height: 24px;
    flex: none;
    display: flex;
    justify-content: flex-end;
    background: #fff;
    border-top: 1px solid #8c8c8c;
    padding: 2px 1px 0 0;
}
.statusbar span {
    width: 133px;
    border-left: 1px solid #d4dadc;
}
.statusbar span:last-child {
    width: 87px;
    border-right: 1px solid #d4dadc;
}

/* taskbar */
.taskbar {
    position: relative;
    height: 40px;
    flex: none;
    display: flex;
    gap: 3px;
    background: #66cbe9;
    border: 1px solid #2f6579;
    border-width: 1px 0;
    border-bottom-color: #5c7f8c;
}
.taskbar button {
    width: 59px;
    display: flex;
    align-items: center;
    justify-content: center;
    background: #74d0ee;
    border: 1px solid #2f6579;
    border-width: 0 1px;
}
.taskbar .start {
    width: 51px;
    margin-right: -3px;
    border-width: 0;
}
.taskbar .stack {
    padding-right: 5px;
    background: linear-gradient(90deg, #74d0ee 53px, #2f6579 53px, #2f6579 54px, #74d0ee 54px);
}
.taskbar .high {
    padding-bottom: 4px;
}
.tray {
    display: flex;
    align-items: center;
    gap: 8px;
    margin-left: auto;
    padding-right: 20px;
    color: #10283a;
}
.tray .more {
    margin-right: 4px;
}
.lang {
    margin: 0 11px 0 6px;
}
time {
    text-align: center;
    font-size: 11px;
    line-height: 17px;
}
.peek {
    position: absolute;
    left: 422px;
    bottom: -1px;
    width: 522px;
    height: 3px;
    background: #fff;
    border-radius: 3px 3px 0 0;
}

/* floating windows */
.window {
    position: absolute;
    display: flex;
    flex-direction: column;
    border: 1px solid #55646c;
}
.window-title {
    display: flex;
    align-items: flex-start;
    flex: none;
    height: 29px;
}
.window-title h2 {
    line-height: 30px;
}
.window-body {
    flex: 1;
    min-height: 0;
    display: flex;
    flex-direction: column;
    background: #f0f0f0;
}
.editor {
    left: 307px;
    top: 74px;
    width: 795px;
    height: 588px;
    padding: 0 8px 8px 7px;
    background: #c2d5dc;
}
.editor .window-title .icon {
    margin: 7px 0 0 2px;
}
.editor h2 {
    padding-left: 80px;
}
.editor .caption {
    margin-right: -3px;
}
.editor .window-body {
    border-top: 1px solid #a9b5ba;
}
.panes {
    flex: 1;
    min-height: 0;
    display: flex;
    gap: 3px;
}
.policy-tree {
    width: 194px;
    display: flex;
    flex-direction: column;
    padding-top: 1px;
}
.policy-tree .root {
    gap: 6px;
    padding: 0 3px;
}
.hscroll {
    display: flex;
    height: 18px;
    margin: auto 1px 0;
    border: 1px solid #b4b4b4;
}
.hscroll button {
    width: 16px;
    display: flex;
    align-items: center;
    justify-content: center;
}
.hscroll button:last-child {
    margin-left: auto;
    border-left: 1px solid #b4b4b4;
}
.hscroll .thumb {
    width: 115px;
    display: flex;
    align-items: center;
    justify-content: center;
    gap: 1px;
    background: #dadada;
    border: 1px solid #b0b0b0;
    border-width: 0 1px;
}
.hscroll i {
    width: 2px;
    height: 7px;
    background: #666;
}
.extension {
    flex: 1;
    display: flex;
    flex-direction: column;
    border: 1px solid #6a6f78;
    border-width: 1px 0 0 1px;
}
.canvas {
    flex: 1;
    padding: 12px 12px 0 13px;
    background: #6384de;
}
.heading {
    display: flex;
    gap: 8px;
    height: 61px;
    color: #fff;
    font-size: 32px;
    line-height: 40px;
}
.heading svg {
    width: 39px;
    height: 39px;
    margin-left: -2px;
}
.card {
    width: 185px;
    background: #d6def7;
    border: 1px solid #fff;
    border-radius: 4px 4px 0 0;
}
.card header {
    display: flex;
    justify-content: space-between;
    align-items: center;
    height: 24px;
    padding: 0 5px 2px 11px;
    border-radius: 3px 3px 0 0;
    background: linear-gradient(90deg, #fff 40%, #c8d3f5);
}
.card h3 {
    padding-top: 5px;
    color: #2a5bc0;
    font: bold 11px/20px "DejaVu Sans Condensed", "DejaVu Sans", sans-serif;
}
.card p {
    padding: 4px 12px;
    color: #767b86;
}
.processing {
    height: 175px;
    margin-bottom: 15px;
}
.description {
    height: 159px;
}
.sheet-tabs {
    display: flex;
    height: 21px;
    background: #f0f0f0;
}
.sheet-tabs button {
    position: relative;
    height: 21px;
    margin-right: -10px;
    padding: 0 10px 0 12px;
    background: #555;
    clip-path: polygon(0 0, 100% 0, calc(100% - 8px) 100%, 8px 100%);
    z-index: 0;
}
.sheet-tabs button::before {
    content: "";
    position: absolute;
    inset: 1px;
    z-index: -1;
    background: #f0f0f0;
    clip-path: polygon(0 0, 100% 0, calc(100% - 8px) 100%, 8px 100%);
}
.sheet-tabs .current {
    z-index: 1;
}
.sheet-tabs .current::before {
    top: 0;
    background: #fff;
}
.editor-status {
    height: 22px;
    padding: 3px 2px 0;
    background: #fff;
    border-top: 1px solid #9a9a9a;
}

/* properties dialog */
.dialog {
    left: 714px;
    top: 210px;
    width: 414px;
    height: 461px;
    padding: 0 7px 7px;
    border-color: #16435a;
    background: #66cbe9;
    font: 11px/16px "DejaVu Sans Condensed", "DejaVu Sans", sans-serif;
}
.dialog .window-title {
    height: 30px;
}
.dialog h2 {
    padding-left: 31px;
    font-family: "Open Sans", sans-serif;
}
.dialog-close {
    display: flex;
    align-items: center;
    justify-content: center;
    width: 34px;
    height: 21px;
    margin-right: -2px;
    background: #c1564f;
    border: 1px solid #7c3a3e;
    border-top: 0;
}
.dialog .window-body {
    padding: 6px 7px 7px 6px;
    border-top: 1px solid #8cb4c1;
}
.tabs {
    display: flex;
    align-items: flex-end;
}
.tabs button {
    height: 18px;
    width: 52px;
    border: 1px solid #8c8c8c;
    border-width: 1px 1px 0 0;
    background: #e8e8e8;
}
.tabs .current {
    height: 21px;
    margin-bottom: -1px;
    border-left-width: 1px;
    background: #fff;
    z-index: 1;
}
.page {
    flex: 1;
    padding: 9px 5px 0 3px;
    background: #fff;
    border: 1px solid #8c8c8c;
}
.action-row {
    display: flex;
    align-items: center;
    height: 41px;
    padding: 0 5px 4px 8px;
}
.action-row svg {
    align-self: flex-start;
    width: 32px;
    height: 32px;
    margin-right: 13px;
}
.action-row label {
    width: 54px;
}
.action-row select {
    flex: 1;
    height: 22px;
    padding-left: 3px;
    border: 1px solid #666;
    appearance: none;
    background: #fff url('data:image/svg+xml,<svg xmlns="http://www.w3.org/2000/svg" width="9" height="7"><path d="M1 1l3.500 4L8 1" fill="none" stroke="%23555" stroke-width="2"/></svg>') no-repeat right 4px center;
}
.page hr {
    margin: 0 0 15px;
    border: 0;
    border-top: 1px solid #8c8c8c;
}
.field {
    display: flex;
    align-items: center;
    padding: 0 8px 0 7px;
    margin-bottom: 4px;
}
.field label {
    width: 98px;
}
.field input {
    flex: 1;
    min-width: 0;
    height: 20px;
    margin-right: 7px;
    padding: 0 1px 0 4px;
    border: 1px solid #666;
    background: #fff;
}
.field button {
    width: 28px;
    height: 18px;
    border: 1px solid #707070;
    background: #dcdcdc;
}
.field .default {
    border-color: #3b7bb4;
}
.options {
    padding: 3px 7px 0 105px;
}
.check {
    display: flex;
    align-items: center;
    height: 16px;
    gap: 2px;
}
.check input {
    appearance: none;
    width: 13px;
    height: 13px;
    border: 1px solid #666;
    background: #fff;
}
.check input:checked {
    background: #fff url('data:image/svg+xml,<svg xmlns="http://www.w3.org/2000/svg" width="11" height="11"><path d="M2 5l3 3 4-6" fill="none" stroke="%23111" stroke-width="2"/></svg>') no-repeat center;
}
.check.off {
    color: #7a7a7a;
}
.check.off input {
    border-color: #b0b0b0;
}
fieldset {
    height: 90px;
    margin: 5px 0 0;
    padding: 5px 14px;
    border: 1px solid #d8dfe2;
    border-radius: 4px;
}
legend {
    margin-left: -8px;
    padding: 0 2px;
}
.actions {
    display: flex;
    justify-content: flex-end;
    gap: 8px;
    padding-top: 7px;
}
.actions button {
    width: 73px;
    height: 22px;
    border: 1px solid #707070;
    background: #dcdcdc;
}
```
